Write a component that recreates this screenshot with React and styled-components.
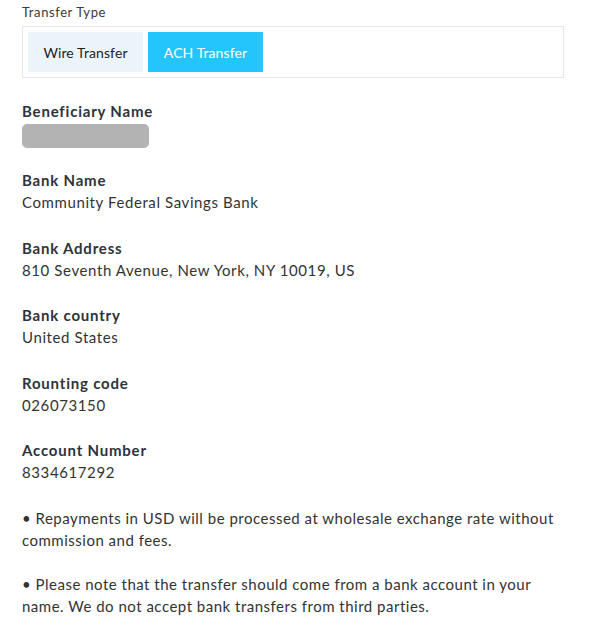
import React from "react";
import styled, { createGlobalStyle } from "styled-components";

const Global = createGlobalStyle`
  html, body { margin: 0; padding: 0; background: #fff; }
  body { font-family: Lato, "Open Sans", sans-serif; -webkit-font-smoothing: antialiased; }
`;

const Page = styled.div`
  width: 542px;
  padding: 1px 0 0 22px;
  color: #333;
`;

const SmallLabel = styled.div`
  font-size: 13px;
  line-height: 22px;
  letter-spacing: 0.6px;
  color: #3a3a3a;
  margin-bottom: 3px;
`;

const TypeBox = styled.div`
  border: 1px solid #e6e6e6;
  padding: 5px;
  display: flex;
  gap: 5px;
  margin-bottom: 22px;
`;

const TypeButton = styled.button`
  height: 40px;
  width: 115px;
  border: none;
  padding: 0;
  font-family: inherit;
  font-size: 14px;
  letter-spacing: 0.1px;
  background: ${(p) => (p.$active ? "#24c5fc" : "#ebf4fa")};
  color: ${(p) => (p.$active ? "#fff" : "#1f1f1f")};
  cursor: pointer;
`;

const Field = styled.div`
  margin-bottom: 23.5px;
`;

const Label = styled.div`
  font-size: 15px;
  font-weight: 700;
  line-height: 22px;
  letter-spacing: 0.8px;
  color: #2e333b;
`;

const Value = styled.div`
  font-size: 15px;
  line-height: 22px;
  letter-spacing: 0.6px;
  color: #333;
`;

const Redacted = styled.div`
  margin-top: 2px;
  width: 127px;
  height: 24px;
  border-radius: 5px;
  background: #b3b3b3;
  margin-bottom: -2.5px;
`;

const Note = styled.p`
  margin: 0 0 22px;
  font-size: 15px;
  line-height: 22px;
  letter-spacing: 0.5px;
  color: #333;
`;

const Notes = styled.div`
  padding-top: 0;
`;

const fields = [
  ["Bank Name", "Community Federal Savings Bank"],
  ["Bank Address", "810 Seventh Avenue, New York, NY 10019, US"],
  ["Bank country", "United States"],
  ["Rounting code", "026073150"],
  ["Account Number", "8334617292"],
];

export default function App() {
  return (
    <Page>
      <Global />
      <SmallLabel>Transfer Type</SmallLabel>
      <TypeBox>
        <TypeButton>Wire Transfer</TypeButton>
        <TypeButton $active>ACH Transfer</TypeButton>
      </TypeBox>
      <Field>
        <Label>Beneficiary Name</Label>
        <Redacted />
      </Field>
      {fields.map(([l, v]) => (
        <Field key={l}>
          <Label>{l}</Label>
          <Value>{v}</Value>
        </Field>
      ))}
      <Notes>
        <Note>• Repayments in USD will be processed at wholesale exchange rate without commission and fees.</Note>
        <Note>• Please note that the transfer should come from a bank account in your name. We do not accept bank transfers from third parties.</Note>
      </Notes>
    </Page>
  );
}
